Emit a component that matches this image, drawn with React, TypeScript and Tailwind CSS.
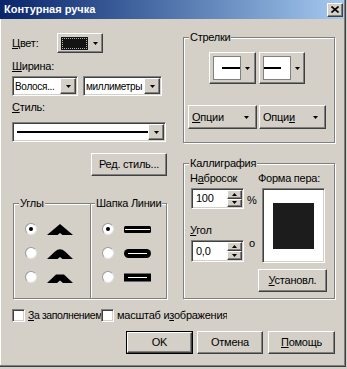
import React from "react";

// classic win9x borders
const raised = "bg-[#d4d0c8] border border-white border-r-[#404040] border-b-[#404040] shadow-[inset_-1px_-1px_0_#808080]";
const sunken = "border border-[#808080] border-r-white border-b-white shadow-[inset_1px_1px_0_#404040,inset_-1px_-1px_0_#d4d0c8]";
const etched = "border border-[#808080] shadow-[1px_1px_0_#fff,inset_1px_1px_0_#fff]";

const Down = () => (
  <svg width="5" height="3" viewBox="0 0 5 3" className="shrink-0">
    <path d="M0 0h5L2.5 3z" fill="#000" />
  </svg>
);

const Up = () => (
  <svg width="5" height="3" viewBox="0 0 5 3" className="shrink-0">
    <path d="M0 3h5L2.5 0z" fill="#000" />
  </svg>
);

function Combo({ w, children }: { w: string; children: React.ReactNode }) {
  return (
    <div className={`${sunken} h-[20px] ${w} flex bg-white p-[1px]`}>
      <div className="flex-1 min-w-0 flex items-center pl-[1px] overflow-hidden whitespace-nowrap text-[10px] tracking-[-0.3px]">{children}</div>
      <div className={`${raised} w-[16px] shrink-0 flex items-center justify-center`}>
        <Down />
      </div>
    </div>
  );
}

function Btn({ className, children, def }: { className: string; children: React.ReactNode; def?: boolean }) {
  if (def) {
    return (
      <div className={`border border-black ${className}`}>
        <div className={`${raised} h-full flex items-center justify-center`}>{children}</div>
      </div>
    );
  }
  return <div className={`${raised} flex items-center justify-center ${className}`}>{children}</div>;
}

function Group({ label, className, labelPos, children }: { label: string; className: string; labelPos: string; children?: React.ReactNode }) {
  return (
    <div className={`relative ${etched} ${className}`}>
      <span className={`absolute -top-[7px] ${labelPos} px-[1px] bg-[#d4d0c8] leading-[13px] whitespace-nowrap`}>{label}</span>
      {children}
    </div>
  );
}

function Radio({ on }: { on?: boolean }) {
  return (
    <div className="w-[12px] h-[12px] shrink-0 rounded-full bg-white border border-[#9a9a9a] border-r-[#e4e4e4] border-b-[#e4e4e4] flex items-center justify-center">
      {on && <div className="w-[4px] h-[4px] rounded-full bg-black" />}
    </div>
  );
}

function Check() {
  return <div className={`${sunken} w-[13px] h-[13px] bg-white shrink-0`} />;
}

function Spin({ value, h }: { value: string; h: string }) {
  return (
    <div className={`${sunken} w-[53px] ${h} bg-white flex p-[1px]`}>
      <div className="flex-1 pl-[3px] flex items-center">{value}</div>
      <div className="w-[15px] flex flex-col">
        <div className={`${raised} flex-1 flex items-center justify-center`}>
          <Up />
        </div>
        <div className={`${raised} flex-1 flex items-center justify-center`}>
          <Down />
        </div>
      </div>
    </div>
  );
}

const joins = [
  "M0 11 L13 0 L26 11 L15.5 11 L13 9 L10.5 11 Z",
  "M0 11 L8 3.5 Q13 -1 18 3.5 L26 11 L15.5 11 L13 9 L10.5 11 Z",
  "M0 11 L9 2.5 L17 2.5 L26 11 L16 11 L13 8.5 L10 11 Z",
];

function Cap({ kind }: { kind: number }) {
  return (
    <svg width="27" height="9" viewBox="0 0 27 9">
      {kind === 0 && <rect x="0" y="1" width="27" height="7" rx="1.5" fill="#000" />}
      {kind === 1 && <rect x="0" y="0" width="27" height="9" rx="4.5" fill="#000" />}
      {kind === 2 && <rect x="0" y="0.5" width="27" height="8" fill="#000" />}
      <rect x={kind === 0 ? 1 : 4} y="4" width={kind === 0 ? 25 : 19} height="1" fill="#fff" />
    </svg>
  );
}

export default function App() {
  return (
    <div className="w-[347px] h-[369px] bg-[#d4d0c8] font-['Liberation_Sans',Arial,sans-serif] text-[11px] leading-[13px] tracking-[-0.25px] text-black select-none">
      <div className="w-[346px] h-[367px] flex flex-col shadow-[inset_-1px_-1px_0_#404040,inset_-2px_-2px_0_#808080,inset_1px_0_0_#fff]">
        {/* title bar */}
        <div className="h-[19px] mr-[2px] flex items-center justify-between pl-[4px] pr-[1px] bg-linear-to-r from-[#0a246a] to-[#a6caf0]">
          <span className="text-white font-bold text-[11px] tracking-normal">Контурная ручка</span>
          <div className={`${raised} w-[16px] h-[14px] flex items-center justify-center`}>
            <svg width="8" height="7" viewBox="0 0 8 7">
              <path d="M0.5 0.5L7.5 6.5M7.5 0.5L0.5 6.5" stroke="#000" strokeWidth="1.6" />
            </svg>
          </div>
        </div>

        {/* body */}
        <div className="flex pl-[12px]">
          {/* left column */}
          <div className="w-[155px] flex flex-col">
            <div className="mt-[14px] h-[20px] flex items-center">
              <span className="w-[45px]">
                <span className="underline">Ц</span>вет:
              </span>
              <div className={`${raised} w-[46px] h-[20px] flex items-center justify-between pl-[3px] pr-[4px]`}>
                <div className="w-[27px] h-[13px] bg-[#141414] p-[1px]">
                  <div className="w-full h-full border border-dotted border-[#b0b0b0]" />
                </div>
                <Down />
              </div>
            </div>
            <div className="mt-[7px]">
              <span className="underline">Ш</span>ирина:
            </div>
            <div className="mt-[3px] flex gap-[5px]">
              <Combo w="w-[66px]">Волося...</Combo>
              <Combo w="w-[79px]">миллиметры</Combo>
            </div>
            <div className="mt-[5px]">
              <span className="underline">С</span>тиль:
            </div>
            <div className="mt-[8px]">
              <Combo w="w-[154px]">
                <div className="h-[2px] w-[132px] bg-black ml-[2px]" />
              </Combo>
            </div>
            <Btn className="mt-[11px] self-end w-[76px] h-[23px]">Ред. стиль...</Btn>
            <div className="mt-[27px] ml-[1px] flex">
              <Group label="Углы" labelPos="left-[5px]" className="w-[78px] h-[96px]">
                <div className="flex flex-col pt-[18px] pl-[11px] gap-[10px]">
                  {joins.map((d, i) => (
                    <div key={i} className="h-[14px] flex items-center gap-[10px]">
                      <Radio on={i === 0} />
                      <svg width="26" height="11" viewBox="0 0 26 11">
                        <path d={d} fill="#000" />
                      </svg>
                    </div>
                  ))}
                </div>
              </Group>
              <Group label="Шапка Линии" labelPos="left-[4px]" className="-ml-[1px] w-[77px] h-[96px]">
                <div className="flex flex-col pt-[18px] pl-[11px] gap-[10px]">
                  {[0, 1, 2].map((k) => (
                    <div key={k} className="h-[14px] flex items-center gap-[10px]">
                      <Radio on={k === 0} />
                      <Cap kind={k} />
                    </div>
                  ))}
                </div>
              </Group>
            </div>
          </div>

          {/* right column */}
          <div className="ml-[16px] w-[152px] flex flex-col">
            <Group label="Стрелки" labelPos="left-[5px]" className="mt-[18px] h-[106px]">
              <div className="pt-[14px] pl-[25px] flex gap-[3px]">
                <div className={`${raised} w-[47px] h-[32px] flex items-center pl-[3px]`}>
                  <div className="w-[28px] h-[24px] bg-white border border-[#808080] flex items-center justify-end">
                    <div className="w-[18px] h-[2px] bg-black" />
                  </div>
                  <div className="ml-[4px]">
                    <Down />
                  </div>
                </div>
                <div className={`${raised} w-[46px] h-[32px] flex items-center pl-[3px]`}>
                  <div className="w-[28px] h-[24px] bg-white border border-[#808080] flex items-center justify-start">
                    <div className="w-[17px] h-[2px] bg-black" />
                  </div>
                  <div className="ml-[4px]">
                    <Down />
                  </div>
                </div>
              </div>
              <div className="mt-[21px] pl-[4px] flex gap-[2px]">
                <div className={`${raised} w-[69px] h-[24px] flex items-center justify-between pl-[3px] pr-[7px]`}>
                  <span>
                    <span className="underline">О</span>пции
                  </span>
                  <Down />
                </div>
                <div className={`${raised} w-[67px] h-[24px] flex items-center justify-between pl-[3px] pr-[7px]`}>
                  <span>
                    Опци<span className="underline">и</span>
                  </span>
                  <Down />
                </div>
              </div>
            </Group>

            <Group label="Каллиграфия" labelPos="left-[5px]" className="mt-[20px] h-[136px]">
              <div className="flex pt-[8px] pl-[6px]">
                <div className="w-[68px] flex flex-col">
                  <div>
                    Н<span className="underline">а</span>бросок
                  </div>
                  <div className="mt-[3px] ml-[1px] flex items-center">
                    <Spin value="100" h="h-[21px]" />
                    <span className="ml-[3px] mt-[4px]">%</span>
                  </div>
                  <div className="mt-[15px]">
                    <span className="underline">У</span>гол
                  </div>
                  <div className="mt-[3px] ml-[1px] flex items-start">
                    <Spin value="0,0" h="h-[22px]" />
                    <span className="ml-[5px] -mt-[3px]">o</span>
                  </div>
                </div>
                <div className="flex flex-col">
                  <div>Форма пера:</div>
                  <div className={`${sunken} mt-[3px] ml-[4px] w-[63px] h-[75px] bg-white flex items-center justify-center`}>
                    <div className="w-[41px] h-[46px] bg-[#1c1c1c]" />
                  </div>
                  <Btn className="mt-[6px] w-[69px] h-[23px]">
                    <span>
                      <span className="underline">У</span>становл.
                    </span>
                  </Btn>
                </div>
              </div>
            </Group>
          </div>
        </div>

        {/* checkboxes */}
        <div className="mt-[10px] pl-[12px] flex items-center h-[13px]">
          <Check />
          <span className="ml-[3px] w-[73px] overflow-hidden whitespace-nowrap text-[10.5px] tracking-[-0.4px]">
            <span className="underline">З</span>а заполнением
          </span>
          <Check />
          <span className="ml-[3px] w-[110px] overflow-hidden whitespace-nowrap">
            масштаб и<span className="underline">з</span>ображения
          </span>
        </div>

        {/* buttons */}
        <div className="mt-[9px] pr-[11px] flex justify-end">
          <Btn def className="w-[67px] h-[23px]">OK</Btn>
          <Btn className="ml-[4px] w-[66px] h-[23px]">Отмена</Btn>
          <Btn className="ml-[5px] w-[67px] h-[23px]">
            <span>
              <span className="underline">П</span>омощь
            </span>
          </Btn>
        </div>
      </div>
    </div>
  );
}
